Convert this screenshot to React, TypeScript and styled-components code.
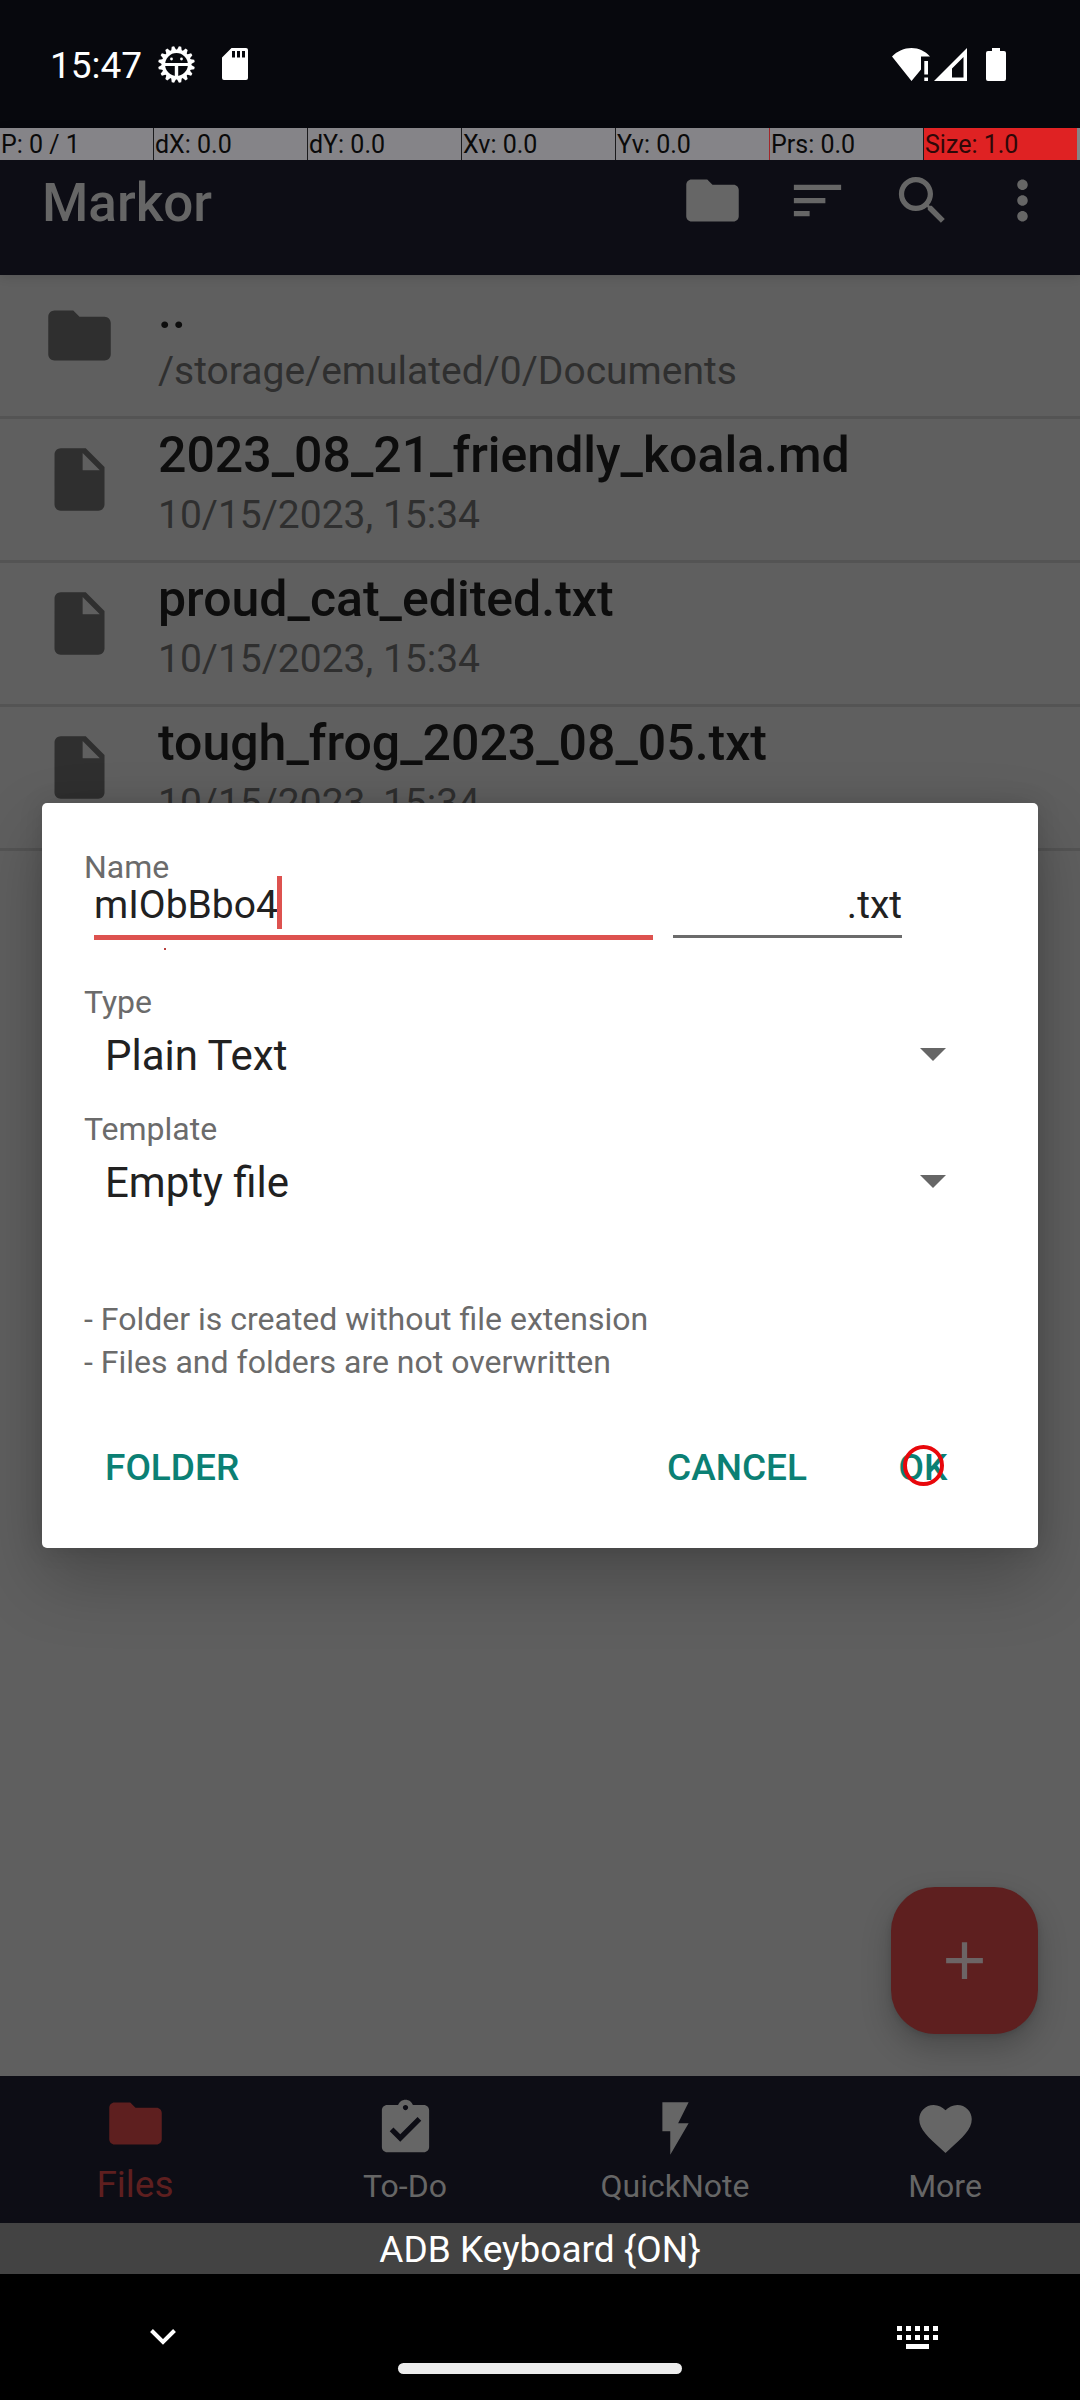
import React, { useId, useState } from "react";
import styled, { createGlobalStyle } from "styled-components";

const color = {
  statusBar: "#07080d",
  appBar: "#0d0d15",
  page: "#5f5f5f",
  divider: "#545454",
  dimIcon: "#666666",
  rowIcon: "#2f2f2f",
  rowTitle: "#0d0d0d",
  accent: "#dd524f",
  accentDim: "#5e1f1f",
  teal: "#0b8074",
  label: "#6b6b6b",
  ink: "#212121",
};

const GlobalStyle = createGlobalStyle`
  *, *::before, *::after { box-sizing: border-box; }
  body { margin: 0; background: #000; font-family: Roboto, "Noto Sans", sans-serif; }
  button, input, select { font: inherit; color: inherit; margin: 0; padding: 0; border: 0; border-radius: 0; background: none; }
  svg { display: block; flex: none; }
`;

const Screen = styled.div`
  display: flex;
  flex-direction: column;
  min-height: 100vh;
`;

/* ---------- status bar ---------- */

const StatusBar = styled.header`
  display: flex;
  align-items: center;
  height: 128px;
  padding: 0 74px 0 50px;
  background: ${color.statusBar};
  color: #fff;
`;

const Clock = styled.time`
  padding-top: 3px;
  font-size: 37px;
  line-height: 44px;
  margin-right: 16px;
`;

const StatusGroup = styled.div<{ $gap: number; $end?: boolean }>`
  display: flex;
  align-items: center;
  gap: ${(p) => p.$gap}px;
  margin-left: ${(p) => (p.$end ? "auto" : "0")};
`;

/* ---------- pointer readout ---------- */

const PointerStrip = styled.div`
  position: absolute;
  inset: 0 0 auto;
  z-index: 3;
  display: grid;
  grid-template-columns: repeat(7, 1fr);
  padding-right: 2px;
  background: #858488;
`;

const PointerCell = styled.span<{ $edge: string; $fill?: string }>`
  height: 32px;
  padding-left: 1px;
  border-right: 1px solid ${(p) => p.$edge};
  background: ${(p) => p.$fill ?? "transparent"};
  color: ${(p) => (p.$fill ? "#2e0808" : "#0a0a0a")};
  font-size: 25px;
  line-height: 34px;
  white-space: nowrap;
`;

/* ---------- app window ---------- */

const AppWindow = styled.div`
  position: relative;
  flex: 1;
  display: flex;
  flex-direction: column;
  background: ${color.page};
`;

const Toolbar = styled.div`
  display: flex;
  align-items: center;
  height: 147px;
  padding: 0 10px 2px 42px;
  background: ${color.appBar};
  color: ${color.dimIcon};
  box-shadow: 0 2px 10px rgba(0, 0, 0, 0.12);
`;

const Title = styled.h1`
  flex: 1;
  margin: 0;
  padding-top: 5px;
  font-size: 53px;
  font-weight: 500;
  line-height: 62px;
`;

const ToolButton = styled.button<{ $narrow?: boolean }>`
  display: grid;
  place-items: center;
  width: ${(p) => (p.$narrow ? 95 : 105)}px;
  height: 105px;
`;

const Content = styled.main`
  position: relative;
  flex: 1;
`;

const FileList = styled.ul`
  margin: 0;
  padding: 0;
  list-style: none;
`;

const FileRow = styled.li`
  display: flex;
  gap: 41px;
  padding: 5px 42px 22px;
  border-bottom: 3px solid ${color.divider};
`;

const FileIcon = styled.span`
  padding-top: 18px;
  height: 93px;
  color: ${color.rowIcon};
`;

const FileText = styled.div`
  display: flex;
  flex-direction: column;
  gap: 6px;
`;

const FileName = styled.span`
  color: ${color.rowTitle};
  font-size: 50px;
  font-weight: 500;
  line-height: 62px;
`;

const FileMeta = styled.span`
  color: ${color.rowIcon};
  font-size: 39px;
  line-height: 46px;
`;

const Fab = styled.button`
  position: absolute;
  right: 42px;
  bottom: 42px;
  display: grid;
  place-items: center;
  width: 147px;
  height: 147px;
  border-radius: 44px;
  background: ${color.accentDim};
  color: #6c6465;
  box-shadow: 0 14px 30px rgba(0, 0, 0, 0.22), 0 2px 6px rgba(0, 0, 0, 0.12);
`;

const BottomNav = styled.nav`
  display: grid;
  grid-template-columns: repeat(4, 1fr);
  background: ${color.appBar};
`;

const NavItem = styled.button<{ $active?: boolean }>`
  display: flex;
  flex-direction: column;
  align-items: center;
  gap: 7px;
  height: 147px;
  padding-top: ${(p) => (p.$active ? 16 : 21)}px;
  color: ${(p) => (p.$active ? color.accentDim : color.dimIcon)};
  font-size: ${(p) => (p.$active ? 37 : 32)}px;
  line-height: ${(p) => (p.$active ? 46 : 38)}px;
`;

/* ---------- dialog ---------- */

const DialogLayer = styled.div`
  position: absolute;
  inset: 0;
  z-index: 2;
  display: flex;
  align-items: center;
  padding: 0 42px;
`;

const Dialog = styled.form`
  flex: 1;
  padding: 47px 0 34px;
  border-radius: 5px;
  background: #fff;
  color: ${color.ink};
  box-shadow: 0 30px 70px rgba(0, 0, 0, 0.24), 0 0 24px rgba(0, 0, 0, 0.12);
`;

const Fields = styled.div`
  padding: 0 42px;
`;

const Label = styled.label`
  display: block;
  color: ${color.label};
  font-size: 32px;
  line-height: 34px;
`;

const NameRow = styled.div`
  display: flex;
  align-items: flex-start;
  gap: 20px;
  margin-bottom: 45px;
  padding: 0 94px 0 10px;
`;

const NameField = styled.div`
  position: relative;
  flex: 1;
`;

const TextInput = styled.input<{ $focused?: boolean }>`
  display: block;
  width: 100%;
  height: ${(p) => (p.$focused ? 56 : 54)}px;
  padding: 0 0 9px;
  border-bottom: ${(p) => (p.$focused ? `5px solid ${color.accent}` : `3px solid ${color.label}`)};
  outline: none;
  font-size: 39px;
  line-height: 42px;
  text-align: ${(p) => (p.$focused ? "left" : "right")};
`;

const ExtensionField = styled.div`
  width: 229px;
`;

const Caret = styled.i`
  position: absolute;
  top: -8px;
  left: 183px;
  width: 5px;
  height: 53px;
  background: ${color.accent};
`;

const SpellMark = styled.i`
  position: absolute;
  top: 64px;
  left: 70px;
  width: 2px;
  height: 2px;
  background: #b8413e;
`;

const SelectGroup = styled.div`
  margin-bottom: 19px;
`;

const SelectBox = styled.div`
  position: relative;
`;

const Select = styled.select`
  display: block;
  appearance: none;
  width: 100%;
  height: 74px;
  padding-left: 21px;
  font-size: 42px;
  line-height: 74px;
`;

const SelectArrow = styled.svg`
  position: absolute;
  top: 29px;
  right: 50px;
  pointer-events: none;
`;

const Hints = styled.p`
  margin: 78px 0 36px;
  color: ${color.label};
  font-size: 32px;
  line-height: 43px;
  white-space: pre-line;
`;

const Actions = styled.div`
  display: flex;
  gap: 11px;
  padding: 0 31px 0 42px;
`;

const ActionButton = styled.button<{ $start?: boolean }>`
  position: relative;
  min-width: 168px;
  height: 94px;
  padding: 0 21px;
  margin-right: ${(p) => (p.$start ? "auto" : "0")};
  color: ${color.teal};
  font-size: 37px;
  font-weight: 500;
`;

const TouchRing = styled.i`
  position: absolute;
  top: 25px;
  left: 64px;
  width: 41px;
  height: 41px;
  border: 4px solid #e8070b;
  border-radius: 50%;
`;

/* ---------- keyboard and system navigation ---------- */

const KeyboardStrip = styled.div`
  padding-top: 3px;
  background: #434343;
  color: #fff;
  font-size: 37px;
  line-height: 48px;
  text-align: center;
`;

const SystemNav = styled.footer`
  display: flex;
  align-items: center;
  justify-content: space-between;
  height: 126px;
  padding: 0 131px;
  background: #000;
  color: #fff;
`;

const SystemButton = styled.button`
  display: grid;
  place-items: center;
  width: 63px;
  height: 63px;
`;

const HomePill = styled.div`
  align-self: flex-end;
  width: 284px;
  height: 11px;
  margin-bottom: 26px;
  border-radius: 6px;
  background: #ececec;
`;

/* ---------- icons ---------- */

const paths = {
  folder: "M10 4H4c-1.1 0-1.99.9-1.99 2L2 18c0 1.1.9 2 2 2h16c1.1 0 2-.9 2-2V8c0-1.1-.9-2-2-2h-8l-2-2z",
  file: "M6 2c-1.1 0-1.99.9-1.99 2L4 20c0 1.1.89 2 1.99 2H18c1.1 0 2-.9 2-2V8l-6-6H6zm7 7V3.5L18.5 9H13z",
  sort: "M3 18h6v-2H3v2zM3 6v2h18V6H3zm0 7h12v-2H3v2z",
  search:
    "M15.5 14h-.79l-.28-.27C15.41 12.59 16 11.11 16 9.5 16 5.91 13.09 3 9.5 3S3 5.91 3 9.5 5.91 16 9.5 16c1.61 0 3.09-.59 4.23-1.57l.27.28v.79l5 4.99L20.49 19l-4.99-5zm-6 0C7.01 14 5 11.99 5 9.5S7.01 5 9.5 5 14 7.01 14 9.5 11.99 14 9.5 14z",
  more: "M12 8c1.1 0 2-.9 2-2s-.9-2-2-2-2 .9-2 2 .9 2 2 2zm0 2c-1.1 0-2 .9-2 2s.9 2 2 2 2-.9 2-2-.9-2-2-2zm0 6c-1.1 0-2 .9-2 2s.9 2 2 2 2-.9 2-2-.9-2-2-2z",
  add: "M19 13h-6v6h-2v-6H5v-2h6V5h2v6h6v2z",
  todo: "M19 3h-4.18C14.4 1.84 13.3 1 12 1c-1.3 0-2.4.84-2.82 2H5c-1.1 0-2 .9-2 2v14c0 1.1.9 2 2 2h14c1.1 0 2-.9 2-2V5c0-1.1-.9-2-2-2zm-7 0c.55 0 1 .45 1 1s-.45 1-1 1-1-.45-1-1 .45-1 1-1zm-2 14l-4-4 1.41-1.41L10 14.17l6.59-6.59L18 9l-8 8z",
  bolt: "M7 2v11h3v9l7-12h-4l4-8z",
  heart:
    "M12 21.35l-1.45-1.32C5.4 15.36 2 12.28 2 8.5 2 5.42 4.42 3 7.5 3c1.74 0 3.41.81 4.5 2.09C13.09 3.81 14.76 3 16.5 3 19.58 3 22 5.42 22 8.5c0 3.78-3.4 6.86-8.55 11.54L12 21.35z",
};

function Icon({ name, size = 63 }: { name: keyof typeof paths; size?: number }) {
  return (
    <svg width={size} height={size} viewBox="0 0 24 24" fill="currentColor" aria-hidden="true">
      <path d={paths[name]} />
    </svg>
  );
}

function GearIcon() {
  const teeth = Array.from({ length: 16 }, (_, i) => i * 22.5 + 11.25);
  return (
    <svg width="37" height="37" viewBox="-18.5 -18.5 37 37" fill="#fff" aria-hidden="true">
      {teeth.map((a) => (
        <path key={a} d="M-2.8 -13.5L-1.2 -18.3H1.2L2.8 -13.5z" transform={`rotate(${a})`} />
      ))}
      <circle r="13.2" fill="none" stroke="#fff" strokeWidth="3.6" />
      <path d="M-13 -1.5H13V1.6H1.7V13H-1.7V1.6H-13z" />
      <circle cx="-5" cy="-5.5" r="1.4" />
      <circle cx="5" cy="-5.5" r="1.4" />
    </svg>
  );
}

function SdCardIcon() {
  return (
    <svg width="26" height="32" viewBox="0 0 26 32" aria-hidden="true">
      <path
        fill="#fff"
        fillRule="evenodd"
        d="M9.5 0H24a2 2 0 0 1 2 2v28a2 2 0 0 1-2 2H2a2 2 0 0 1-2-2V9.500zM10 3v6.500h3V3zM15 3v6.500h3V3zM20 3v6.500h3V3z"
      />
    </svg>
  );
}

function WifiIcon() {
  return (
    <svg width="38" height="33" viewBox="0 0 38 33" fill="#fff" aria-hidden="true">
      <path d="M0 8.500C5.500 3 12 0 19.500 0S33 3 38 8.500H29V21.500L19.500 33z" />
      <path d="M32.300 13h3.700v13.500h-3.700zM32.300 29.500h3.700V33h-3.700z" />
    </svg>
  );
}

function SignalIcon() {
  return (
    <svg width="33" height="33" viewBox="0 0 33 33" aria-hidden="true">
      <path fill="#fff" fillRule="evenodd" d="M33 0V33H0zM29.500 9L18 20.500V29.500H29.500z" />
    </svg>
  );
}

function BatteryIcon() {
  return (
    <svg width="20" height="33" viewBox="0 0 20 33" fill="#fff" aria-hidden="true">
      <path d="M6 0h8v3h4a2 2 0 0 1 2 2v26a2 2 0 0 1-2 2H2a2 2 0 0 1-2-2V5a2 2 0 0 1 2-2h4z" />
    </svg>
  );
}

function KeyboardIcon() {
  return (
    <svg width="41" height="23" viewBox="0 0 41 23" fill="#fff" aria-hidden="true">
      {[0, 9].map((y) => [0, 9, 18, 27, 36].map((x) => <rect key={`${x}-${y}`} x={x} y={y} width="5" height="5" />))}
      <rect x="9" y="18" width="23" height="5" />
    </svg>
  );
}

/* ---------- data ---------- */

const pointerCells = [
  { text: "P: 0 / 1", edge: "#1b1b1d" },
  { text: "dX: 0.0", edge: "#1b1b1d" },
  { text: "dY: 0.0", edge: "#1b1b1d" },
  { text: "Xv: 0.0", edge: "#1b1b1d" },
  { text: "Yv: 0.0", edge: "#a3272a" },
  { text: "Prs: 0.0", edge: "#1b1b1d" },
  { text: "Size: 1.0", edge: "#858488", fill: "#df2223" },
];

const files: { icon: "folder" | "file"; name: string; meta: string }[] = [
  { icon: "folder", name: "..", meta: "/storage/emulated/0/Documents" },
  { icon: "file", name: "2023_08_21_friendly_koala.md", meta: "10/15/2023, 15:34" },
  { icon: "file", name: "proud_cat_edited.txt", meta: "10/15/2023, 15:34" },
  { icon: "file", name: "tough_frog_2023_08_05.txt", meta: "10/15/2023, 15:34" },
];

const tabs: { icon: keyof typeof paths; text: string }[] = [
  { icon: "folder", text: "Files" },
  { icon: "todo", text: "To-Do" },
  { icon: "bolt", text: "QuickNote" },
  { icon: "heart", text: "More" },
];

function LabeledSelect({ label, options }: { label: string; options: string[] }) {
  const id = useId();
  return (
    <SelectGroup>
      <Label htmlFor={id}>{label}</Label>
      <SelectBox>
        <Select id={id}>
          {options.map((o) => (
            <option key={o}>{o}</option>
          ))}
        </Select>
        <SelectArrow width="26" height="13" viewBox="0 0 26 13" fill="#666" aria-hidden="true">
          <path d="M0 0h26L13 13z" />
        </SelectArrow>
      </SelectBox>
    </SelectGroup>
  );
}

function NewFileDialog() {
  const [name, setName] = useState("mIObBbo4");
  const [extension, setExtension] = useState(".txt");
  const nameId = useId();
  return (
    <DialogLayer>
      <Dialog role="dialog" aria-label="New file" onSubmit={(e) => e.preventDefault()}>
        <Fields>
          <Label htmlFor={nameId}>Name</Label>
          <NameRow>
            <NameField>
              <TextInput id={nameId} $focused spellCheck={false} value={name} onChange={(e) => setName(e.target.value)} />
              <Caret />
              <SpellMark />
            </NameField>
            <ExtensionField>
              <TextInput
                aria-label="File extension"
                spellCheck={false}
                value={extension}
                onChange={(e) => setExtension(e.target.value)}
              />
            </ExtensionField>
          </NameRow>
          <LabeledSelect label="Type" options={["Plain Text"]} />
          <LabeledSelect label="Template" options={["Empty file"]} />
          <Hints>{"- Folder is created without file extension\n- Files and folders are not overwritten"}</Hints>
        </Fields>
        <Actions>
          <ActionButton type="button" $start>
            FOLDER
          </ActionButton>
          <ActionButton type="button">CANCEL</ActionButton>
          <ActionButton type="submit">
            OK
            <TouchRing />
          </ActionButton>
        </Actions>
      </Dialog>
    </DialogLayer>
  );
}

export default function App() {
  return (
    <>
      <GlobalStyle />
      <Screen>
        <StatusBar>
          <Clock>15:47</Clock>
          <StatusGroup $gap={27}>
            <GearIcon />
            <SdCardIcon />
          </StatusGroup>
          <StatusGroup $gap={4} $end>
            <WifiIcon />
            <StatusGroup $gap={19}>
              <SignalIcon />
              <BatteryIcon />
            </StatusGroup>
          </StatusGroup>
        </StatusBar>

        <AppWindow>
          <PointerStrip>
            {pointerCells.map((c) => (
              <PointerCell key={c.text} $edge={c.edge} $fill={c.fill}>
                {c.text}
              </PointerCell>
            ))}
          </PointerStrip>

          <Toolbar>
            <Title>Markor</Title>
            <ToolButton aria-label="Go to">
              <Icon name="folder" />
            </ToolButton>
            <ToolButton aria-label="Sort by">
              <Icon name="sort" />
            </ToolButton>
            <ToolButton aria-label="Search">
              <Icon name="search" />
            </ToolButton>
            <ToolButton $narrow aria-label="More options">
              <Icon name="more" />
            </ToolButton>
          </Toolbar>

          <Content>
            <FileList>
              {files.map((f) => (
                <FileRow key={f.name}>
                  <FileIcon>
                    <Icon name={f.icon} size={75} />
                  </FileIcon>
                  <FileText>
                    <FileName>{f.name}</FileName>
                    <FileMeta>{f.meta}</FileMeta>
                  </FileText>
                </FileRow>
              ))}
            </FileList>
            <Fab aria-label="Create new file">
              <Icon name="add" />
            </Fab>
          </Content>

          <BottomNav>
            {tabs.map((t, i) => (
              <NavItem key={t.text} $active={i === 0}>
                <Icon name={t.icon} />
                {t.text}
              </NavItem>
            ))}
          </BottomNav>

          <NewFileDialog />
        </AppWindow>

        <KeyboardStrip>ADB Keyboard {"{ON}"}</KeyboardStrip>
        <SystemNav>
          <SystemButton aria-label="Hide keyboard">
            <svg width="26" height="16" viewBox="0 0 26 16" fill="none" stroke="#fff" strokeWidth="4" aria-hidden="true">
              <path d="M1.500 1.500L13 13L24.500 1.500" />
            </svg>
          </SystemButton>
          <HomePill />
          <SystemButton aria-label="Switch keyboard">
            <KeyboardIcon />
          </SystemButton>
        </SystemNav>
      </Screen>
    </>
  );
}
